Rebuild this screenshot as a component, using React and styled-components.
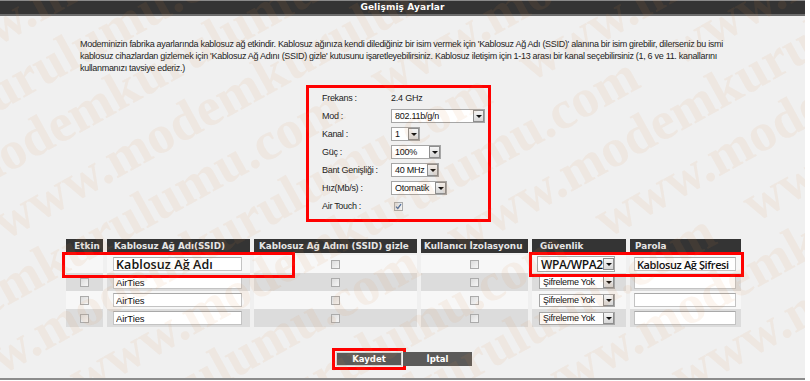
import React from "react";
import styled, { createGlobalStyle } from "styled-components";

const GlobalStyle = createGlobalStyle`
  html, body {
    margin: 0;
    padding: 0;
    background: #ffffff;
  }
  body {
    font-family: "Liberation Sans", Arial, sans-serif;
  }
`;

const Page = styled.div`
  position: relative;
  width: 805px;
  height: 378px;
  background: #f0f0f0;
  border-bottom: 2px solid #8c8c8c;
  overflow: hidden;
  display: flex;
  flex-direction: column;
`;

const TitleBar = styled.div`
  height: 13px;
  border-top: 1px solid #8a8a8a;
  border-bottom: 2px solid #6c6c6c;
  background: #343434;
  color: #ffffff;
  font-family: "DejaVu Sans", Verdana, sans-serif;
  font-weight: 700;
  font-size: 9px;
  letter-spacing: 0.1px;
  line-height: 13px;
  text-align: center;
`;

const Intro = styled.p`
  margin: 22px 0 0 80px;
  font-family: "Liberation Sans", Arial, sans-serif;
  font-size: 9px;
  line-height: 12px;
  letter-spacing: -0.3px;
  color: #222;
  white-space: nowrap;
`;

const SettingsBox = styled.div`
  box-sizing: border-box;
  margin: 11px 0 0 306px;
  width: 185px;
  height: 137px;
  border: 3px solid #ff0000;
  padding: 1px 0 0 13px;
  display: flex;
  flex-direction: column;
`;

const FieldRow = styled.div`
  display: flex;
  align-items: center;
  height: 18px;
`;

const FieldLabel = styled.div`
  width: 69px;
  font-size: 9px;
  letter-spacing: -0.3px;
  color: #222;
`;

const FieldValue = styled.div`
  font-size: 9px;
  letter-spacing: -0.2px;
  color: #222;
`;

const SelectBox = styled.div`
  box-sizing: border-box;
  width: ${(p) => p.$w}px;
  height: ${(p) => p.$h || 14}px;
  border: 1px solid #a6a6a6;
  background: #ffffff;
  display: flex;
  align-items: center;
  justify-content: space-between;
  padding-left: 3px;
  font-family: ${(p) =>
    p.$big ? '"Open Sans", sans-serif' : '"Liberation Sans", Arial, sans-serif'};
  font-size: ${(p) => (p.$big ? 12 : 9)}px;
  font-weight: ${(p) => (p.$big ? 600 : 400)};
  letter-spacing: ${(p) => (p.$big ? -0.4 : -0.25)}px;
  color: #111;
  white-space: nowrap;
  overflow: hidden;
`;

const ArrowBtn = styled.span`
  box-sizing: border-box;
  flex: none;
  width: 11px;
  height: 12px;
  border: 1px solid #8e8e8e;
  background: linear-gradient(#f6f6f6, #d6d6d6);
  display: flex;
  align-items: center;
  justify-content: center;
  &::after {
    content: "";
    width: 0;
    height: 0;
    border-left: 3px solid transparent;
    border-right: 3px solid transparent;
    border-top: 3px solid #111;
  }
`;

const Check = styled.span`
  box-sizing: border-box;
  display: inline-block;
  vertical-align: middle;
  width: 9px;
  height: 9px;
  margin-left: ${(p) => p.$offset || 0}px;
  border: 1px solid #ababab;
  background: linear-gradient(135deg, #dcdcdc, #f6f6f6);
  position: relative;
  svg {
    position: absolute;
    left: 0;
    top: 0;
  }
`;

const TableWrap = styled.div`
  position: relative;
  margin: 17px 0 0 62px;
  width: 683px;
`;

const Grid = styled.table`
  border-collapse: separate;
  border-spacing: 4px 0;
  table-layout: fixed;
  width: 683px;
`;

const HeadCell = styled.th`
  box-sizing: border-box;
  width: ${(p) => p.$w}px;
  height: 16px;
  padding: 0 0 0 ${(p) => p.$pad || 5}px;
  background: #343434;
  background-clip: padding-box;
  border-bottom: 2px solid transparent;
  color: #e6e6e6;
  font-family: "DejaVu Sans", Verdana, sans-serif;
  font-weight: 700;
  font-size: 8.8px;
  text-align: ${(p) => p.$align || "left"};
  white-space: nowrap;
  overflow: hidden;
`;

const BodyCell = styled.td`
  height: 18px;
  padding: 0 0 0 ${(p) => p.$pad || 0}px;
  background: ${(p) => (p.$shade ? "#dcdcdc" : "#f7f7f7")};
  text-align: ${(p) => p.$align || "left"};
  vertical-align: middle;
  font-size: 0;
`;

const TextBox = styled.input`
  box-sizing: border-box;
  width: ${(p) => p.$w}px;
  height: 14px;
  margin: 0;
  padding: 0 2px;
  border: 1px solid #c3c3c3;
  border-top-color: #a9a9a9;
  background: #ffffff;
  font-family: ${(p) =>
    p.$big ? '"Open Sans", sans-serif' : '"Liberation Sans", Arial, sans-serif'};
  font-size: ${(p) => p.$size || 9.5}px;
  font-weight: ${(p) => (p.$big ? 600 : 400)};
  letter-spacing: ${(p) => p.$ls || 0}px;
  color: #111;
  outline: none;
  vertical-align: middle;
`;

const Highlight = styled.div`
  position: absolute;
  box-sizing: border-box;
  left: ${(p) => p.$x}px;
  top: ${(p) => p.$y}px;
  width: ${(p) => p.$w}px;
  height: ${(p) => p.$h}px;
  border: 3px solid #ff0000;
  pointer-events: none;
`;

const ButtonRow = styled.div`
  display: flex;
  margin: 25px 0 0 336px;
`;

const ActionButton = styled.button`
  box-sizing: border-box;
  width: ${(p) => p.$w}px;
  height: 14px;
  margin: 0 1px 0 0;
  padding: 0;
  background: #5b5a59;
  border: 1px solid ${(p) => (p.$focus ? "#d2d2d2" : "#5b5a59")};
  color: #ffffff;
  font-family: "DejaVu Sans", Verdana, sans-serif;
  font-weight: 700;
  font-size: 8.5px;
  outline: ${(p) => (p.$focus ? "3px solid #ff0000" : "none")};
  outline-offset: 1px;
`;

const Watermark = styled.div`
  position: absolute;
  inset: 0;
  overflow: hidden;
  pointer-events: none;
`;

const WatermarkSheet = styled.div`
  position: absolute;
  left: -420px;
  top: -380px;
  width: 1700px;
  transform: rotate(-29deg);
  font-family: "Liberation Serif", serif;
  font-weight: 700;
  font-size: 54px;
  line-height: 58px;
  color: rgba(222, 140, 70, 0.085);
  white-space: nowrap;
`;

const WatermarkLine = styled.div`
  padding-left: ${(p) => p.$shift}px;
`;

const settings = [
  { label: "Frekans :", text: "2.4 GHz" },
  { label: "Mod :", select: "802.11b/g/n", w: 94 },
  { label: "Kanal :", select: "1", w: 29 },
  { label: "Güç :", select: "100%", w: 50 },
  { label: "Bant Genişliği :", select: "40 MHz", w: 48 },
  { label: "Hız(Mb/s) :", select: "Otomatik", w: 56 },
  { label: "Air Touch :", check: true },
];

const columns = [
  { title: "Etkin", w: 37, align: "center", pad: 0 },
  { title: "Kablosuz Ağ Adı(SSID)", w: 143, pad: 7 },
  { title: "Kablosuz Ağ Adını (SSID) gizle", w: 163, pad: 5 },
  { title: "Kullanıcı İzolasyonu", w: 107, pad: 3 },
  { title: "Güvenlik", w: 94, pad: 8 },
  { title: "Parola", w: 111, pad: 5 },
];

const networks = [
  { ssid: "Kablosuz Ağ Adı", security: "WPA/WPA2", password: "Kablosuz Ağ Şifresi", main: true },
  { ssid: "AirTies", security: "Şifreleme Yok", password: "" },
  { ssid: "AirTies", security: "Şifreleme Yok", password: "" },
  { ssid: "AirTies", security: "Şifreleme Yok", password: "" },
];

function Tick() {
  return (
    <svg width="7" height="7" viewBox="0 0 7 7">
      <path d="M1 3.6 L2.8 5.4 L6 1.2" fill="none" stroke="#4f6f9e" strokeWidth="1.3" />
    </svg>
  );
}

function Select({ value, w, h, big }) {
  return (
    <SelectBox $w={w} $h={h} $big={big}>
      {value}
      <ArrowBtn />
    </SelectBox>
  );
}

export default function App() {
  const mark = "www.modemkurulumu.com";
  return (
    <>
      <GlobalStyle />
      <Page>
        <TitleBar>Gelişmiş Ayarlar</TitleBar>
        <Intro>
          Modeminizin fabrika ayarlarında kablosuz ağ etkindir. Kablosuz ağınıza kendi dilediğiniz bir isim vermek için 'Kablosuz Ağ Adı (SSID)' alanına bir isim girebilir, dilerseniz bu ismi
          <br />
          kablosuz cihazlardan gizlemek için 'Kablosuz Ağ Adını (SSID) gizle' kutusunu işaretleyebilirsiniz. Kablosuz iletişim için 1-13 arası bir kanal seçebilirsiniz (1, 6 ve 11. kanallarını
          <br />
          kullanmanızı tavsiye ederiz.)
        </Intro>

        <SettingsBox>
          {settings.map((s) => (
            <FieldRow key={s.label}>
              <FieldLabel>{s.label}</FieldLabel>
              {s.text && <FieldValue>{s.text}</FieldValue>}
              {s.select && <Select value={s.select} w={s.w} />}
              {s.check && (
                <Check $offset={3}>
                  <Tick />
                </Check>
              )}
            </FieldRow>
          ))}
        </SettingsBox>

        <TableWrap>
          <Grid>
            <thead>
              <tr>
                {columns.map((c) => (
                  <HeadCell key={c.title} $w={c.w} $align={c.align} $pad={c.pad}>
                    {c.title}
                  </HeadCell>
                ))}
              </tr>
            </thead>
            <tbody>
              {networks.map((n, i) => {
                const shade = i % 2 === 1;
                return (
                  <tr key={i}>
                    <BodyCell $shade={shade} $align="center">
                      {!n.main && <Check />}
                    </BodyCell>
                    <BodyCell $shade={shade} $pad={6}>
                      <TextBox
                        readOnly
                        value={n.ssid}
                        $w={129}
                        $big={n.main}
                        $size={n.main ? 12.5 : 9.5}
                        $ls={n.main ? 0.1 : -0.1}
                      />
                    </BodyCell>
                    <BodyCell $shade={shade} $align="center">
                      <Check />
                    </BodyCell>
                    <BodyCell $shade={shade} $align="center">
                      <Check />
                    </BodyCell>
                    <BodyCell $shade={shade} $pad={n.main ? 5 : 7}>
                      <Select value={n.security} w={n.main ? 78 : 76} h={n.main ? 16 : 13} big={n.main} />
                    </BodyCell>
                    <BodyCell $shade={shade} $pad={4}>
                      <TextBox
                        readOnly
                        value={n.password}
                        $w={102}
                        $big={n.main}
                        $size={n.main ? 11 : 9.5}
                        $ls={n.main ? -0.4 : 0}
                      />
                    </BodyCell>
                  </tr>
                );
              })}
            </tbody>
          </Grid>
          <Highlight $x={0} $y={13} $w={233} $h={26} />
          <Highlight $x={467} $y={13} $w={215} $h={25} />
        </TableWrap>

        <ButtonRow>
          <ActionButton $w={66} $focus>
            Kaydet
          </ActionButton>
          <ActionButton $w={69}>İptal</ActionButton>
        </ButtonRow>

        <Watermark>
          <WatermarkSheet>
            {Array.from({ length: 16 }, (_, i) => (
              <WatermarkLine key={i} $shift={(i * 137) % 420}>
                {mark}&nbsp;&nbsp;&nbsp;{mark}&nbsp;&nbsp;&nbsp;{mark}
              </WatermarkLine>
            ))}
          </WatermarkSheet>
        </Watermark>
      </Page>
    </>
  );
}
